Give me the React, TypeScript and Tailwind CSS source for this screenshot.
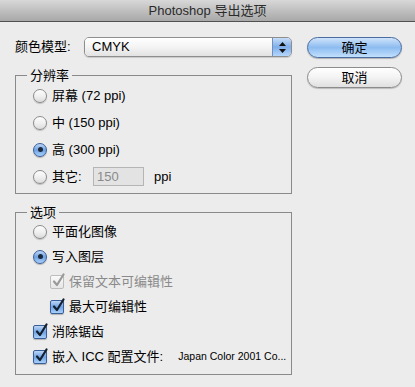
import React from 'react';

const font = { fontFamily: '"Liberation Sans", "Noto Sans CJK SC", sans-serif' };

const Radio: React.FC<{ checked?: boolean }> = ({ checked }) =>
  checked ? (
    <span className="shrink-0 w-[14px] h-[14px] rounded-full border border-[#3a5f98] bg-gradient-to-b from-[#bcd6f6] via-[#6fa2e3] to-[#a9d0fb] flex items-center justify-center shadow-[0_1px_1px_rgba(0,0,0,0.25)]">
      <span className="w-[5px] h-[5px] rounded-full bg-[#1c2a3c]" />
    </span>
  ) : (
    <span className="shrink-0 w-[14px] h-[14px] rounded-full border border-[#8c8c8c] bg-gradient-to-b from-[#fdfdfd] via-[#f0f0f0] to-[#dcdcdc] shadow-[0_1px_1px_rgba(0,0,0,0.2)]" />
  );

const Check: React.FC<{ disabled?: boolean }> = ({ disabled }) => (
  <span
    className={
      disabled
        ? 'shrink-0 relative w-[14px] h-[14px] rounded-[2px] border border-[#bdbdbd] bg-gradient-to-b from-[#fafafa] to-[#e6e6e6]'
        : 'shrink-0 relative w-[14px] h-[14px] rounded-[2px] border border-[#3a5f98] bg-gradient-to-b from-[#bcd6f6] via-[#6fa2e3] to-[#a9d0fb] shadow-[0_1px_1px_rgba(0,0,0,0.25)]'
    }
  >
    <svg className="absolute -top-[3px] left-[1px]" width="14" height="15" viewBox="0 0 14 15">
      <path
        d="M2 8.5 L5 12 L11.5 1.5"
        fill="none"
        stroke={disabled ? '#9a9a9a' : '#15202e'}
        strokeWidth="2.2"
        strokeLinecap="round"
        strokeLinejoin="round"
      />
    </svg>
  </span>
);

const Group: React.FC<{ title: string; className?: string; children: React.ReactNode }> = ({ title, className, children }) => (
  <div className={`relative border border-[#8a8a8a] ${className ?? ''}`}>
    <span className="absolute -top-[9px] left-[11px] px-[3px] bg-[#ececec] text-[13px] leading-[17px] text-black">
      {title}
    </span>
    {children}
  </div>
);

export default function App() {
  return (
    <div className="w-[415px] h-[387px] bg-[#ececec] text-[13px] text-black overflow-hidden whitespace-nowrap" style={font}>
      {/* title bar */}
      <div className="h-[22px] bg-gradient-to-b from-[#d8d8d8] to-[#a8a8a8] border-b border-[#515151] flex items-center justify-center text-[13px] text-[#2a2a2a]">
        Photoshop 导出选项
      </div>

      <div className="flex pl-[15px] pt-[15px]">
        {/* left column */}
        <div className="w-[277px] shrink-0 flex flex-col">
          <div className="flex items-center h-[20px]">
            <span className="w-[69px]">颜色模型:</span>
            <div className="flex h-[20px] w-[208px] rounded-[5px] border border-[#8e8e8e] overflow-hidden shadow-[0_1px_1px_rgba(0,0,0,0.15)]">
              <div className="flex-1 flex items-center pl-[7px] bg-gradient-to-b from-white via-[#f4f4f4] to-[#e2e2e2]">CMYK</div>
              <div className="w-[19px] border-l border-[#6c8fc4] bg-gradient-to-b from-[#c7ddf8] via-[#7eaee9] to-[#b4d6fc] flex flex-col items-center justify-center gap-[3px]">
                <svg width="7" height="4" viewBox="0 0 7 4"><path d="M3.5 0 L7 4 L0 4 Z" fill="#111" /></svg>
                <svg width="7" height="4" viewBox="0 0 7 4"><path d="M0 0 L7 0 L3.5 4 Z" fill="#111" /></svg>
              </div>
            </div>
          </div>

          <Group title="分辨率" className="mt-[18px] h-[119px] pt-[6px] pl-[17px]">
            <div className="flex items-center gap-[5px] h-[27px]"><Radio />屏幕 (72 ppi)</div>
            <div className="flex items-center gap-[5px] h-[27px]"><Radio />中 (150 ppi)</div>
            <div className="flex items-center gap-[5px] h-[27px]"><Radio checked />高 (300 ppi)</div>
            <div className="flex items-center gap-[5px] h-[27px]">
              <Radio />
              <span className="w-[36px]">其它:</span>
              <div className="w-[51px] h-[19px] border border-[#b5b5b5] bg-[#e3e3e3] text-[#8a8a8a] flex items-center pl-[3px]">150</div>
              <span className="ml-[5px]">ppi</span>
            </div>
          </Group>

          <Group title="选项" className="mt-[18px] h-[163px] pt-[6px] pl-[17px]">
            <div className="flex items-center gap-[5px] h-[25px]"><Radio />平面化图像</div>
            <div className="flex items-center gap-[5px] h-[25px]"><Radio checked />写入图层</div>
            <div className="flex items-center gap-[5px] h-[25px] pl-[17px] text-[#8a8a8a]"><Check disabled />保留文本可编辑性</div>
            <div className="flex items-center gap-[5px] h-[25px] pl-[17px]"><Check />最大可编辑性</div>
            <div className="flex items-center gap-[5px] h-[25px]"><Check />消除锯齿</div>
            <div className="flex items-center gap-[5px] h-[25px]">
              <Check />
              <span>嵌入 ICC 配置文件:</span>
              <span className="ml-[10px] text-[10.5px]">Japan Color 2001 Co...</span>
            </div>
          </Group>
        </div>

        {/* right column */}
        <div className="ml-[15px] w-[95px] shrink-0 flex flex-col gap-[9px]">
          <button className="h-[21px] rounded-full border border-[#4a6c9e] bg-gradient-to-b from-[#cfe3fa] via-[#8dbcf0] to-[#c2e0fd] shadow-[0_1px_1px_rgba(0,0,0,0.25)] text-[13px]">
            确定
          </button>
          <button className="h-[21px] rounded-full border border-[#8c8c8c] bg-gradient-to-b from-white via-[#f3f3f3] to-[#e0e0e0] shadow-[0_1px_1px_rgba(0,0,0,0.2)] text-[13px]">
            取消
          </button>
        </div>
      </div>
    </div>
  );
}
